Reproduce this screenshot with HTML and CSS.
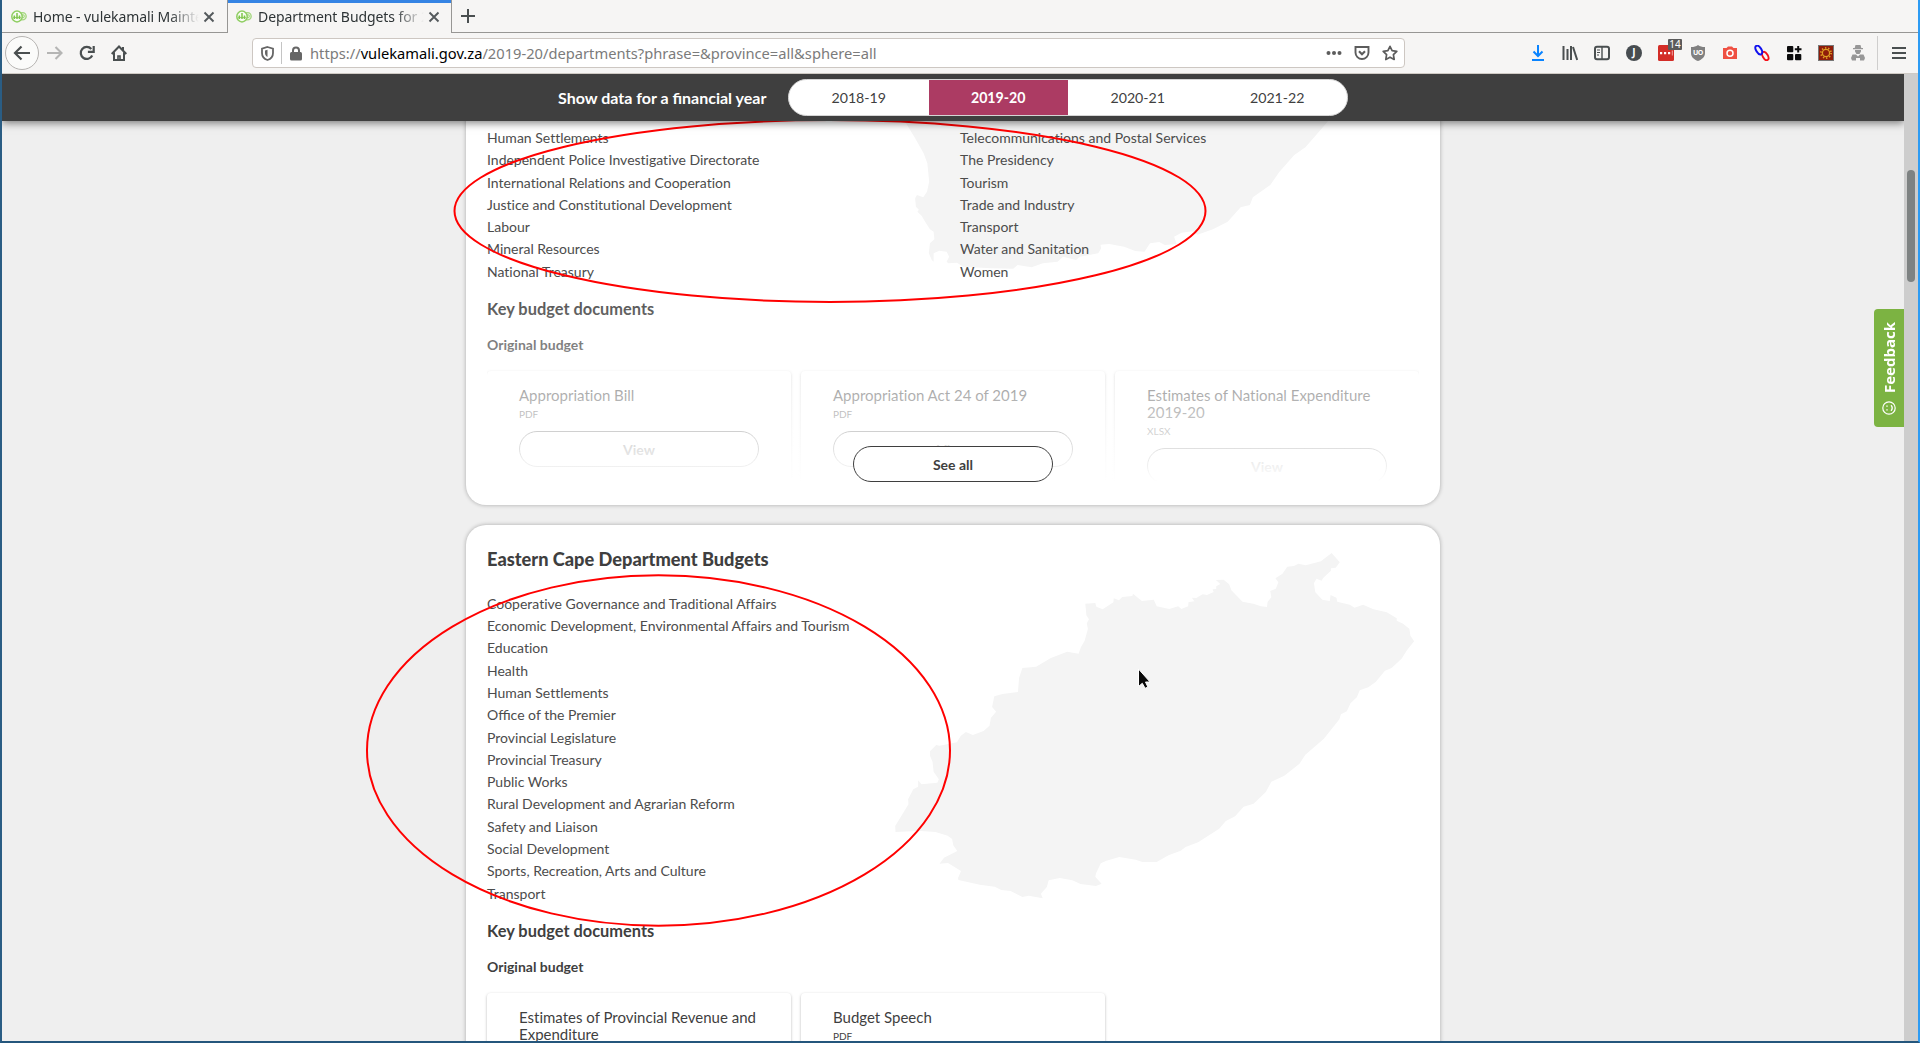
FILE: index.html
```
<!DOCTYPE html>
<html lang="en">
<head>
<meta charset="utf-8">
<title>Department Budgets for 2019-20 - vulekamali</title>
<link rel="stylesheet" href="styles.css">
</head>
<body>
<svg class="defs" width="0" height="0">
  <symbol id="logo" viewBox="0 0 16 13">
    <circle cx="11.600" cy="6.200" r="3.600" fill="#e6f4da" stroke="#a5d680" stroke-width="1.300"/>
    <circle cx="12" cy="6.200" r="1.400" fill="none" stroke="#a5d680"/>
    <ellipse cx="6" cy="6.500" rx="5.200" ry="5.400" fill="#f8fcf5" stroke="#8fce62" stroke-width="1.500"/>
    <path d="M2.200 7.500h7.600" stroke="#9ad072" stroke-width="1.200"/>
    <path d="M3.300 5.500v3.500M6 3v6M8.500 5.500v3.500" stroke="#7dc44a" stroke-width="1.500"/>
  </symbol>
  <symbol id="close" viewBox="0 0 12 12"><path d="M1.500 1.500l9 9M10.500 1.500l-9 9" stroke="#54595c" stroke-width="1.900"/></symbol>
</svg>
<div class="window">
  <div class="tabs">
    <div class="tab">
      <svg class="fav" width="16" height="13"><use href="#logo"/></svg>
      <span class="tab-title">Home - vulekamali Maintenance</span>
      <svg class="x" width="12" height="12"><use href="#close"/></svg>
    </div>
    <div class="tab active">
      <svg class="fav" width="16" height="13"><use href="#logo"/></svg>
      <span class="tab-title">Department Budgets for 2019-20</span>
      <svg class="x" width="12" height="12"><use href="#close"/></svg>
    </div>
    <div class="tab-rest"><svg width="14" height="14" viewBox="0 0 14 14"><path d="M7 0v14M0 7h14" stroke="#4a4f50" stroke-width="2"/></svg></div>
  </div>
  <div class="toolbar">
    <div class="nav">
      <span class="back"><svg width="18" height="16" viewBox="0 0 18 16" fill="none" stroke="#4a4f50" stroke-width="2.200"><path d="M17 8H2M8.500 1.500L2 8l6.500 6.500"/></svg></span>
      <span class="ico"><svg width="16" height="14" viewBox="0 0 16 14" fill="none" stroke="#b5b5b4" stroke-width="2.100"><path d="M0 7h14.500M8.500 1l6 6-6 6"/></svg></span>
      <span class="ico"><svg width="16" height="16" viewBox="0 0 16 16" fill="none" stroke="#4a4f50" stroke-width="2.200"><path d="M13.200 10.500A6 6 0 1 1 12.300 4"/><path d="M14.700 1v5.800H8.900" /></svg></span>
      <span class="ico"><svg width="16" height="16" viewBox="0 0 16 16" fill="none" stroke="#4a4f50" stroke-width="2"><path d="M.700 9L8 1.500 15.300 9M3 7.500V15h10V7.500"/><path d="M12 2v3"/><path d="M7 15v-4h2v4" stroke-width="1.600"/></svg></span>
    </div>
    <div class="urlbar">
      <svg class="shield" width="13" height="15" viewBox="0 0 13 15"><path d="M6.500 1L12 2.600V7c0 3.500-2.300 6-5.500 7C3.300 13 1 10.500 1 7V2.600z" fill="none" stroke="#666" stroke-width="1.800"/><path d="M6.500 3.800V11C4.800 10.200 4 8.500 4 7V4.500z" fill="#666"/></svg>
      <i class="url-sep"></i>
      <svg class="lock" width="12" height="15" viewBox="0 0 12 15"><path d="M3 7V4.500a3 3 0 0 1 6 0V7" fill="none" stroke="#666" stroke-width="2"/><rect y="6" width="12" height="8.500" rx="1.500" fill="#666"/></svg>
      <span class="url">https://<b>vulekamali.gov.za</b>/2019-20/departments?phrase=&amp;province=all&amp;sphere=all</span>
      <span class="url-actions">
        <svg width="16" height="16" viewBox="0 0 16 16" fill="#5c5c5c"><circle cx="2.500" cy="8" r="2"/><circle cx="8" cy="8" r="2"/><circle cx="13.500" cy="8" r="2"/></svg>
        <svg width="16" height="16" viewBox="0 0 16 16" fill="none" stroke="#5c5c5c" stroke-width="1.900"><path d="M1.500 2h13v5.500a6.500 6.500 0 0 1-13 0z"/><path d="M5 6.200l3 3 3-3" stroke-width="2.100"/></svg>
        <svg width="16" height="16" viewBox="0 0 16 16" fill="none" stroke="#5c5c5c" stroke-width="1.700" stroke-linejoin="round"><path d="M8 1.300l2.100 4.300 4.700.7-3.400 3.400.8 4.800L8 12.200l-4.200 2.300.8-4.800L1.200 6.300l4.700-.7z"/></svg>
      </span>
    </div>
    <div class="addons">
      <span class="ico"><svg width="16" height="16" viewBox="0 0 16 16" fill="none" stroke="#0a84ff" stroke-width="2"><path d="M8 0v10.500M3.500 6.500L8 11l4.500-4.500M2 15h12"/></svg></span>
      <span class="ico"><svg width="16" height="16" viewBox="0 0 16 16" stroke="#4a4f50" stroke-width="2"><path d="M1.500 1v14M5.500 4v11M9 1v14M11 2l4.200 13" fill="none"/></svg></span>
      <span class="ico"><svg width="16" height="16" viewBox="0 0 16 16" fill="none" stroke="#4a4f50" stroke-width="2"><rect x="1" y="1.700" width="14" height="12.600" rx="2"/><path d="M8 2v12" stroke-width="1.400"/><path d="M3 5h3M3 7.500h3M3 10h2" stroke-width="1"/></svg></span>
      <span class="ico"><span class="j">J</span></span>
      <span class="ico red"><svg width="16" height="16" viewBox="0 0 16 16"><rect width="16" height="16" rx="1.500" fill="#d32d27"/><path d="M2 7h2.200v2.200H2zM6 7h2.200v2.200H6zM10 7h2.200v2.200H10z" fill="#fff"/><path d="M14.300 5.500v5" stroke="#f3a6a3"/></svg><em>14</em></span>
      <span class="ico"><span class="ub"><svg width="14" height="16" viewBox="0 0 14 16"><path d="M7 0C5 1.500 3 2 0 2v6c0 4 3 6.500 7 8 4-1.500 7-4 7-8V2C11 2 9 1.500 7 0z" fill="#808080"/></svg><small>uo</small></span></span>
      <span class="ico"><svg width="16" height="16" viewBox="0 0 16 16"><path d="M1 3h3.500L6 1.500h4L11.500 3H15v11H1z" fill="#ef5042"/><circle cx="8" cy="8.300" r="3" fill="none" stroke="#fff" stroke-width="1.500"/></svg></span>
      <span class="ico"><svg width="16" height="16" viewBox="0 0 16 16" fill="none" stroke-width="1.900"><ellipse cx="11.300" cy="11" rx="2.500" ry="4.600" transform="rotate(-30 11.300 11)" stroke="#f50f18"/><ellipse cx="4.800" cy="5" rx="2.600" ry="4.800" transform="rotate(-32 4.800 5)" stroke="#1010ee"/></svg></span>
      <span class="ico"><svg width="16" height="16" viewBox="0 0 16 16" fill="#0c0c0d"><rect x="1" y="1" width="6.300" height="6.300" rx="1"/><rect x="1" y="9" width="6.300" height="6.300" rx="1"/><rect x="9" y="9" width="6.300" height="6.300" rx="1"/><path d="M11.200 1h2v2.200h2.300v2h-2.300v2.300h-2V5.200H8.800v-2h2.400z"/></svg></span>
      <span class="ico"><svg width="16" height="16" viewBox="0 0 16 16"><rect x=".5" y=".5" width="15" height="15" fill="#8f1d0a" stroke="#777"/><circle cx="8" cy="8" r="3.600" fill="none" stroke="#e0a024" stroke-width="1.300"/><circle cx="8" cy="8" r="5.100" fill="none" stroke="#e0a024" stroke-width="1.700" stroke-dasharray="1.300 1.900"/></svg></span>
      <span class="ico"><svg width="14" height="16" viewBox="0 0 14 16" fill="#979797"><path d="M4.500 0h5l.8 3H12v1.300H2V3h1.700zM4 5h6v1.500L8.500 9h-3L4 6.500zM1.500 9.500h3.500l2 2 2-2h3.500L14 13l-1 2.500H9V13H5v2.500H1L0 13z"/></svg></span>
      <i class="tool-sep"></i>
      <svg class="burger" width="14" height="12" viewBox="0 0 14 12"><path d="M0 1h14M0 6h14M0 11h14" stroke="#4a4f50" stroke-width="2"/></svg>
    </div>
  </div>
  <div class="viewport">
    <div class="page">
      <header class="years">
        <span class="years-label liga">Show data for a financial year</span>
        <nav class="pill"><a>2018-19</a><a class="on">2019-20</a><a>2020-21</a><a>2021-22</a></nav>
      </header>
      <main>
        <section class="card first">
          <svg class="map map-za" viewBox="0 0 1568 540" preserveAspectRatio="none" width="580" height="180"><path fill="#f4f4f4" d="M50 0L65 30 95 85 118 130 128 160 133 215 127 245 117 262 100 255 95 265 97 290 105 299 101 305 113 318 122 335 135 358 145 365 147 388 135 400 132 430 140 450 145 455 145 430 160 422 180 425 187 440 180 455 185 460 208 458 225 470 300 475 360 476 372 465 410 472 440 460 480 455 495 440 530 450 540 440 590 430 598 415 596 404 620 402 660 410 690 423 715 425 730 400 755 396 770 405 802 402 795 380 815 368 845 364 858 374 900 358 940 335 975 292 1000 285 1008 262 1055 225 1080 185 1120 135 1150 112 1175 80 1210 35 1235 0z"/></svg>
          <div class="columns">
            <ul class="depts"><li>Human Settlements</li><li>Independent Police Investigative Directorate</li><li>International Relations and Cooperation</li><li>Justice and Constitutional Development</li><li>Labour</li><li>Mineral Resources</li><li>National Treasury</li></ul>
            <ul class="depts"><li>Telecommunications and Postal Services</li><li>The Presidency</li><li>Tourism</li><li>Trade and Industry</li><li>Transport</li><li>Water and Sanitation</li><li>Women</li></ul>
          </div>
          <h3>Key budget documents</h3>
          <h4>Original budget</h4>
          <div class="docs">
            <article class="doc"><p class="doc-name">Appropriation Bill</p><p class="kind">PDF</p><a class="btn">View</a></article>
            <article class="doc"><p class="doc-name">Appropriation Act 24 of 2019</p><p class="kind">PDF</p><a class="btn">View</a></article>
            <article class="doc"><p class="doc-name">Estimates of National Expenditure 2019-20</p><p class="kind">XLSX</p><a class="btn">View</a></article>
          </div>
          <div class="fade"><a class="btn see-all">See all</a></div>
        </section>
        <section class="card">
          <svg class="map map-ec" viewBox="0 0 1568 1200" preserveAspectRatio="none" width="580" height="400"><path fill="#f4f4f4" d="M1221 69L1243 97 1232 113 1219 115 1219 122 1198 144 1194 152 1180 146 1173 160 1177 187 1196 209 1216 213 1218 195 1234 203 1236 215 1270 224 1283 233 1306 224 1334 238 1370 247 1397 265 1397 272 1414 281 1431 296 1434 317 1444 334 1425 360 1410 386 1383 414 1365 422 1340 456 1320 472 1297 481 1289 502 1272 520 1262 544 1246 553 1242 568 1200 626 1150 674 1134 701 1093 737 1058 755 1043 786 1010 821 983 830 960 859 935 873 917 896 860 937 826 951 813 962 780 976 748 996 709 996 691 989 647 981 612 992 597 1000 584 1030 582 1040 599 1061 584 1068 542 1062 520 1051 486 1044 456 1051 451 1071 435 1091 440 1105 402 1097 385 1101 353 1083 328 1080 310 1070 270 1064 212 1050 211 1044 219 1023 184 999 161 1001 173 983 209 963 198 946 195 927 183 917 150 906 110 903 100 903 42 906 41 888 77 823 76 808 90 778 103 770 103 751 112 763 155 758 159 748 145 725 142 695 135 677 135 664 152 645 161 647 208 637 218 618 232 606 251 615 280 603 296 587 300 563 314 545 303 531 309 499 331 492 373 486 376 444 385 414 422 410 462 384 506 365 537 371 543 352 553 333 562 297 559 280 565 268 558 256 555 221 582 219 585 230 602 238 631 217 632 205 646 211 655 201 682 198 684 191 708 213 740 209 748 229 782 237 806 229 815 237 833 229 834 217 850 214 843 203 855 204 872 193 884 195 902 186 899 178 909 177 909 169 920 162 908 150 929 149 944 163 950 181 980 215 1009 221 1030 229 1046 231 1048 215 1058 202 1055 183 1070 176 1077 157 1069 145 1088 131 1101 110 1119 108 1131 101 1151 106 1192 94z"/></svg>
          <h2>Eastern Cape Department Budgets</h2>
          <ul class="depts"><li>Cooperative Governance and Traditional Affairs</li><li>Economic Development, Environmental Affairs and Tourism</li><li>Education</li><li>Health</li><li>Human Settlements</li><li class="liga">Office of the Premier</li><li>Provincial Legislature</li><li>Provincial Treasury</li><li>Public Works</li><li>Rural Development and Agrarian Reform</li><li>Safety and Liaison</li><li>Social Development</li><li>Sports, Recreation, Arts and Culture</li><li>Transport</li></ul>
          <h3>Key budget documents</h3>
          <h4>Original budget</h4>
          <div class="docs">
            <article class="doc"><p class="doc-name">Estimates of Provincial Revenue and Expenditure</p><p class="kind">PDF</p><a class="btn">View</a></article>
            <article class="doc"><p class="doc-name">Budget Speech</p><p class="kind">PDF</p><a class="btn">View</a></article>
          </div>
        </section>
      </main>
      <div class="feedback"><svg width="14" height="14" viewBox="0 0 14 14" fill="none" stroke="#fff" stroke-width="1.200"><circle cx="7" cy="7" r="6.200"/><path d="M9 4.200c1.600 1.500 1.600 4.100 0 5.600M5 4.500v1.200M5 8.300v1.200" stroke-width="1.400"/></svg><span>Feedback</span></div>
    </div>
    <div class="scrollbar"><i class="thumb"></i></div>
  </div>
  <svg class="marks" width="1920" height="1043" viewBox="0 0 1920 1043" fill="none">
    <ellipse cx="830" cy="211" rx="375.500" ry="91" stroke="#f00" stroke-width="2"/>
    <ellipse cx="658.500" cy="750.500" rx="291.500" ry="175.200" stroke="#f00" stroke-width="2"/>
    <path d="M1138.500 669V686.500l3.800-3.200 2.800 5 2.800-1.300-2.400-5h4.600z" fill="#0a0a0a" stroke="#fff"/>
  </svg>
</div>
</body>
</html>
```
FILE: styles.css
```
* { box-sizing: border-box; }
body { margin: 0; overflow: hidden; }
ul, p, h2, h3, h4 { margin: 0; padding: 0; list-style: none; }
.defs { position: absolute; }
.window {
  position: relative; display: flex; flex-direction: column;
  width: 1920px; height: 1043px;
  border-left: 2px solid #2a5d84; border-right: 2px solid #2d9bf3; border-bottom: 2px solid #24567c;
  background: #f6f5f4; overflow: hidden;
  font-family: "Noto Sans", sans-serif; color: #2e3436;
}

/* browser chrome */
.tabs { display: flex; height: 33px; flex: none; }
.tab {
  display: flex; align-items: center; width: 225px; padding: 1px 12px 0 9px;
  border-bottom: 1px solid #979694;
}
.tab.active {
  width: 225px; padding: 0 11px 0 8px; border: 1px solid #979694; border-width: 0 1px;
  box-shadow: inset 0 3px #3584e4;
}
.fav { flex: none; margin-right: 6px; }
.tab-title {
  flex: 1; overflow: hidden; white-space: nowrap; font-size: 14px; line-height: 30px; padding-top: 1px;
  letter-spacing: -.08px;
  -webkit-mask-image: linear-gradient(90deg, #000 82%, transparent);
  mask-image: linear-gradient(90deg, #000 82%, transparent);
}
.x { flex: none; margin-left: 4px; }
.tab-rest { flex: 1; display: flex; align-items: center; padding-left: 9px; border-bottom: 1px solid #979694; }
.toolbar {
  display: flex; align-items: center; height: 41px; flex: none; padding: 0 0 0 3px;
  border-bottom: 1px solid #cfcac4;
}
.nav { display: flex; align-items: center; width: 247px; }
.back {
  display: flex; align-items: center; justify-content: center; width: 34px; height: 34px;
  border: 1px solid #b6b4b2; border-radius: 50%; background: #fbfbfa;
}
.ico { position: relative; display: flex; align-items: center; justify-content: center; width: 32px; height: 32px; }
.urlbar {
  display: flex; align-items: center; width: 1153px; height: 30px; padding: 0 6px 0 8px;
  border: 1px solid #cdc7c2; border-radius: 4px; background: #fff;
}
.url-sep { width: 1px; height: 22px; margin: 0 8px 0 7px; background: #c4c4c4; }
.url { margin-left: 8px; font-size: 14.7px; line-height: 20px; color: #7b7b7b; white-space: nowrap; }
.url b { font-weight: 400; color: #000; }
.url-actions { display: flex; gap: 12px; margin-left: auto; }
.addons { display: flex; align-items: center; margin-left: 117px; }
.j {
  width: 16px; height: 16px; border-radius: 50%; background: #474c50; color: #fff;
  font: 700 10px/15px "Open Sans", sans-serif; text-align: center;
}
.red em {
  position: absolute; left: 18px; top: 2px; width: 14px; height: 11px; border-radius: 1px;
  background: #5b5b5b; color: #fff; font: 10px/11px "Noto Sans", sans-serif; text-align: center;
}
.ub { display: grid; place-items: center; }
.ub > * { grid-area: 1 / 1; }
.ub small { z-index: 1; color: #fff; font: 700 7px/8px "Open Sans", sans-serif; text-transform: uppercase; letter-spacing: -.5px; }
.tool-sep { width: 1px; height: 34px; margin: 0 14px 0 3px; background: #cfcecd; }

/* web page */
.viewport { flex: 1; display: flex; min-height: 0; }
.page {
  position: relative; display: flex; flex-direction: column; width: 1902px; overflow: hidden;
  background: #efefef; color: #3f3f3f; font-family: Lato, sans-serif; font-variant-ligatures: none;
}
.liga { font-variant-ligatures: normal; }
.years {
  z-index: 3; display: flex; align-items: center; height: 47px; flex: none; padding-left: 556px;
  background: #3f3f3f; box-shadow: 0 2px 8px rgba(0, 0, 0, .5);
}
.years-label { width: 230px; font-size: 16px; font-weight: 700; line-height: 24px; color: #fff; }
.pill {
  display: flex; width: 560px; height: 37px; border: 1px solid #d5d5d5; border-radius: 19px;
  background: #fff; overflow: hidden;
}
.pill a { flex: 1; font-size: 14.2px; line-height: 36px; text-align: center; }
.pill .on { background: #ac3b63; color: #fff; font-weight: 700; }
main { display: flex; flex-direction: column; gap: 20px; padding-left: 464px; }
.card {
  position: relative; flex: none; width: 974px; padding: 21px; border-radius: 20px;
  background: #fff; box-shadow: 0 0 4px rgba(0, 0, 0, .3);
}
.card.first { height: 404px; margin-top: -20px; padding-top: 26px; }
.map { position: absolute; left: 414px; }
.map-za { top: 9px; }
.map-ec { top: 5px; }
.columns { display: grid; grid-template-columns: 1fr 1fr; column-gap: 14px; }
.depts { position: relative; }
.depts li { font-size: 14px; line-height: 22.3px; color: #4c4c4c; white-space: nowrap; }
h2 { position: relative; margin-bottom: 20.8px; font-size: 18.2px; line-height: 26px; font-weight: 900; }
h3 { margin-top: 15px; font-size: 16.400px; line-height: 22px; font-weight: 700; }
h4 { margin: 15px 0 16px; font-size: 14px; line-height: 20px; font-weight: 700; }
.docs { display: grid; grid-template-columns: repeat(3, 304px); gap: 10px; align-items: start; }
.doc { height: 130px; padding: 16px 32px; border-radius: 4px; box-shadow: 0 1px 3px rgba(0, 0, 0, .28); }
.doc-name { font-size: 15px; line-height: 17px; }
.kind { margin: 3px 0 10px; font-size: 10px; line-height: 14px; }
.btn {
  display: block; height: 36px; border: 1px solid #3f3f3f; border-radius: 18px;
  font-size: 14px; line-height: 35px; font-weight: 700; text-align: center;
}
.first .docs { height: 110px; clip-path: inset(-3px 0 0 0); }
.fade {
  position: absolute; left: 1px; right: 1px; bottom: 23px; height: 207px;
  display: flex; align-items: flex-end; justify-content: center;
  background: linear-gradient(rgba(255, 255, 255, 0), #fff);
}
.see-all { width: 200px; background: #fff; }
.feedback {
  position: absolute; right: 0; top: 235px; width: 30px; height: 118px;
  display: flex; flex-direction: column-reverse; align-items: center; gap: 8px; padding: 12px 0;
  border-radius: 4px 0 0 4px; background: #7cb342; color: #fff;
}
.feedback svg { flex: none; }
.feedback span { writing-mode: vertical-rl; transform: rotate(180deg); font: 700 15px/20px "Open Sans", sans-serif; }
.scrollbar { flex: 1; padding: 96px 0 0 3px; background: #cdcdcd; }
.thumb { display: block; width: 8px; height: 112px; border-radius: 4px; background: #7e8282; }
.marks { position: absolute; left: -2px; top: 0; }
```
